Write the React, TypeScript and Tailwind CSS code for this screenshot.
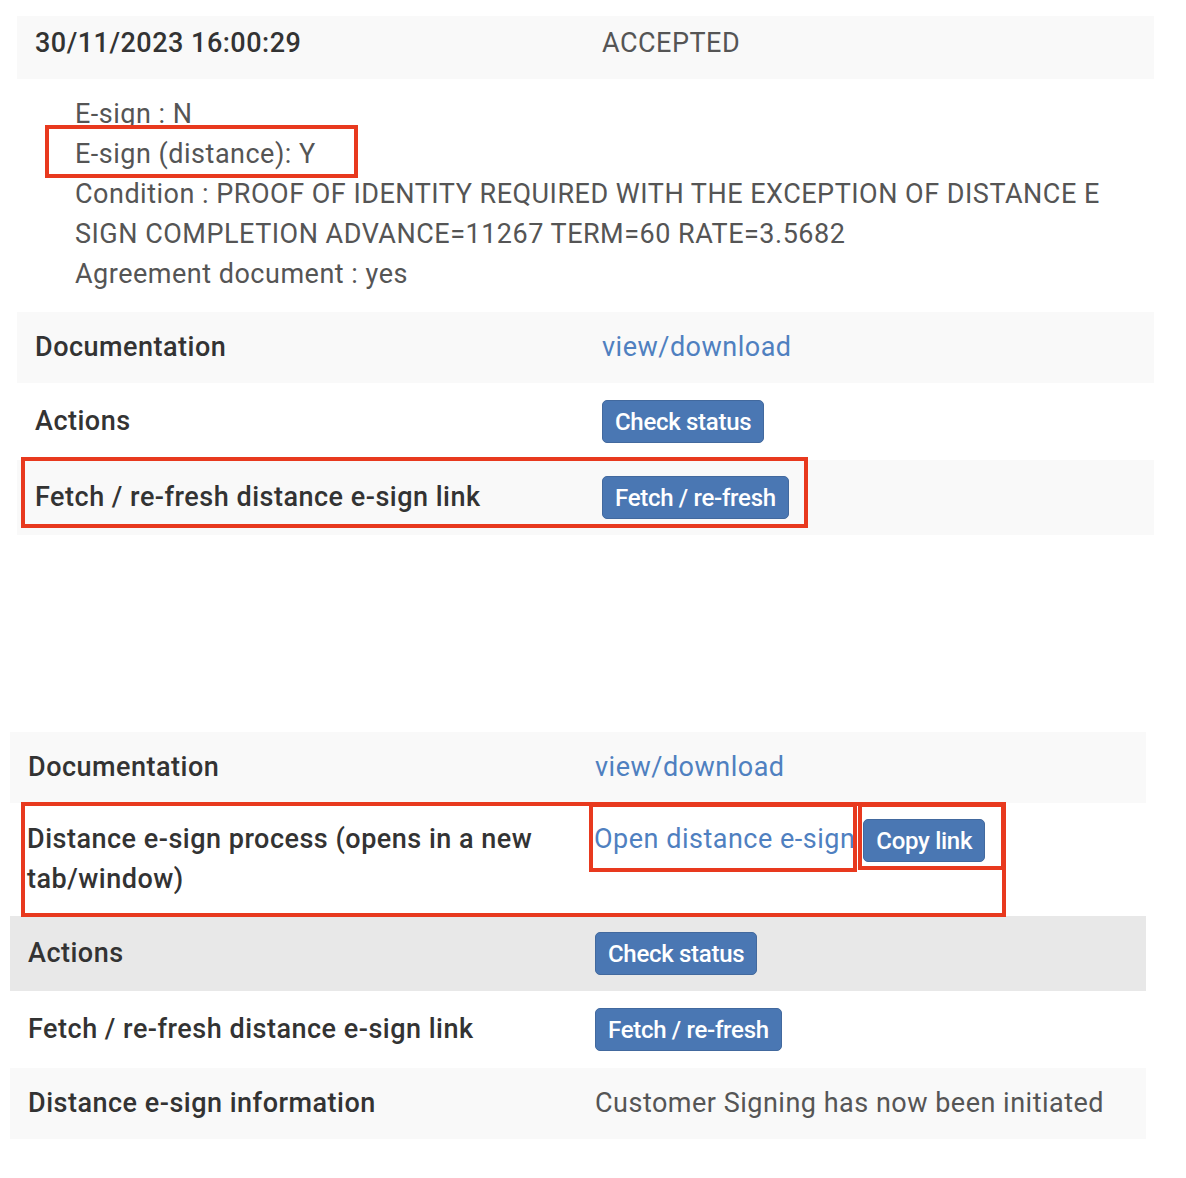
import React from "react";

const font = { fontFamily: "Roboto, 'Liberation Sans', sans-serif" };

function Btn({ children }: { children: React.ReactNode }) {
  return (
    <button className="inline-flex items-center h-[43px] px-[12px] rounded-[5px] bg-[#4a77b3] border border-[#42699e] text-white text-[24px] font-medium tracking-[-0.3px]">
      {children}
    </button>
  );
}

function Row({
  label,
  children,
  bg = "",
  h,
}: {
  label: React.ReactNode;
  children: React.ReactNode;
  bg?: string;
  h: string;
}) {
  return (
    <div className={`flex items-center ${h} ${bg}`}>
      <div className="w-[567px] shrink-0 pl-[18px] text-[27px] tracking-[0.5px] font-medium text-[#333]">
        {label}
      </div>
      <div className="pl-[18px] text-[27px] tracking-[0.5px] text-[#555]">{children}</div>
    </div>
  );
}

const Box = ({ className }: { className: string }) => (
  <div className={`absolute border-[4px] border-[#e8391e] pointer-events-none ${className}`} />
);

export default function App() {
  return (
    <div className="min-h-[1178px] bg-white" style={font}>
      {/* first capture */}
      <div className="relative ml-[17px] pt-[16px] w-[1137px]">
        <div className="flex items-center h-[63px] pb-[8px] bg-[#f9f9f9]">
          <div className="w-[567px] shrink-0 pl-[18px] text-[27px] tracking-[0.5px] font-medium text-[#333]">
            30/11/2023 16:00:29
          </div>
          <div className="pl-[18px] text-[27px] tracking-[0.5px] text-[#555]">ACCEPTED</div>
        </div>
        <div className="pl-[58px] pr-[30px] pt-[15px] pb-[18px] text-[27px] tracking-[0.5px] leading-[40px] text-[#555]">
          <div>E-sign : N</div>
          <div>E-sign (distance): Y</div>
          <div>
            Condition : PROOF OF IDENTITY REQUIRED WITH THE EXCEPTION OF DISTANCE E SIGN COMPLETION
            ADVANCE=11267 TERM=60 RATE=3.5682
          </div>
          <div>Agreement document : yes</div>
        </div>
        <Row label="Documentation" bg="bg-[#f9f9f9]" h="h-[71px]">
          <a className="text-[#4f80c0]">view/download</a>
        </Row>
        <Row label="Actions" h="h-[77px]">
          <Btn>Check status</Btn>
        </Row>
        <Row label="Fetch / re-fresh distance e-sign link" bg="bg-[#f9f9f9]" h="h-[75px]">
          <Btn>Fetch / re-fresh</Btn>
        </Row>
        <Box className="left-[28px] top-[125px] w-[313px] h-[53px]" />
        <Box className="left-[4px] top-[457px] w-[787px] h-[71px]" />
      </div>

      {/* second capture */}
      <div className="relative ml-[10px] mt-[197px] w-[1136px]">
        <Row label="Documentation" bg="bg-[#f9f9f9]" h="h-[71px]">
          <a className="text-[#4f80c0]">view/download</a>
        </Row>
        <div className="flex h-[113px] pt-[16px]">
          <div className="w-[567px] shrink-0 pl-[17px] pr-[18px] text-[27px] tracking-[0.5px] leading-[40px] font-medium text-[#333]">
            Distance e-sign process (opens in a new tab/window)
          </div>
          <div className="pl-[17px] flex items-start gap-[8px] text-[27px] tracking-[0.5px] leading-[40px]">
            <a className="text-[#4f80c0]">Open distance e-sign</a>
            <Btn>Copy link</Btn>
          </div>
        </div>
        <Row label="Actions" bg="bg-[#e8e8e8]" h="h-[75px]">
          <Btn>Check status</Btn>
        </Row>
        <Row label="Fetch / re-fresh distance e-sign link" h="h-[77px]">
          <Btn>Fetch / re-fresh</Btn>
        </Row>
        <Row label="Distance e-sign information" bg="bg-[#f9f9f9]" h="h-[71px]">
          Customer Signing has now been initiated
        </Row>
        <Box className="left-[11px] top-[70px] w-[985px] h-[115px]" />
        <Box className="left-[579px] top-[71px] w-[268px] h-[69px]" />
        <Box className="left-[848px] top-[71px] w-[147px] h-[67px]" />
      </div>
    </div>
  );
}
